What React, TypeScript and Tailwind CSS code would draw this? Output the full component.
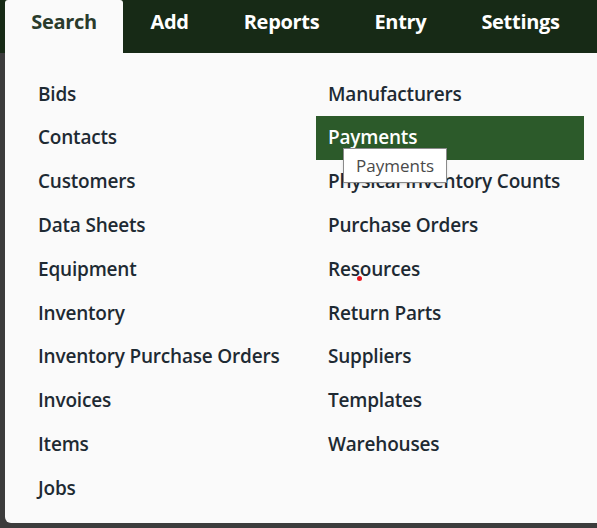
import React from "react";

const tabs = ["Search", "Add", "Reports", "Entry", "Settings"];

const left = [
  "Bids",
  "Contacts",
  "Customers",
  "Data Sheets",
  "Equipment",
  "Inventory",
  "Inventory Purchase Orders",
  "Invoices",
  "Items",
  "Jobs",
];

const right = [
  "Manufacturers",
  "Payments",
  "Physical Inventory Counts",
  "Purchase Orders",
  "Resources",
  "Return Parts",
  "Suppliers",
  "Templates",
  "Warehouses",
];

const font = { fontFamily: "'Open Sans', 'Noto Sans', sans-serif" };

function MenuLink({ label, active, dot }: { label: string; active?: boolean; dot?: boolean }) {
  return (
    <div
      className={
        "relative h-[43.8px] flex items-center pl-3 text-[19px] font-semibold tracking-[-0.2px] " +
        (active ? "bg-[#2c5a2a] text-white" : "text-[#1e2a33]")
      }
    >
      {label}
      {active && (
        <div className="absolute left-[27px] top-[32px] z-10 border border-[#8a8a8a] bg-white px-[12px] py-[4px] text-[17px] font-normal tracking-normal text-[#4a4a4a] shadow-sm">
          Payments
        </div>
      )}
      {dot && <span className="absolute left-[41px] top-[29px] h-[5px] w-[5px] rounded-full bg-[#e8141b]" />}
    </div>
  );
}

export default function App() {
  return (
    <div className="w-[597px] h-[528px] bg-[#3c3c3c] overflow-hidden" style={font}>
      <div className="flex h-[53px] bg-[#172a16] pl-[5px]">
        {tabs.map((t, i) => (
          <div
            key={t}
            className={
              "flex items-center pb-[9px] text-[20px] font-bold tracking-[-0.3px] " +
              (i === 0
                ? "bg-[#fafafa] text-[#2a3b2c] rounded-t-[3px] w-[118px] justify-center"
                : "text-white px-[27.5px]")
            }
          >
            {t}
          </div>
        ))}
      </div>
      <div className="ml-[5px] h-[470px] bg-[#fafafa] rounded-bl-[6px] flex pt-[19px]">
        <div className="w-[311px] pl-[21px]">
          {left.map((l) => (
            <MenuLink key={l} label={l} />
          ))}
        </div>
        <div className="w-[268px]">
          {right.map((r) => (
            <MenuLink key={r} label={r} active={r === "Payments"} dot={r === "Resources"} />
          ))}
        </div>
      </div>
    </div>
  );
}
